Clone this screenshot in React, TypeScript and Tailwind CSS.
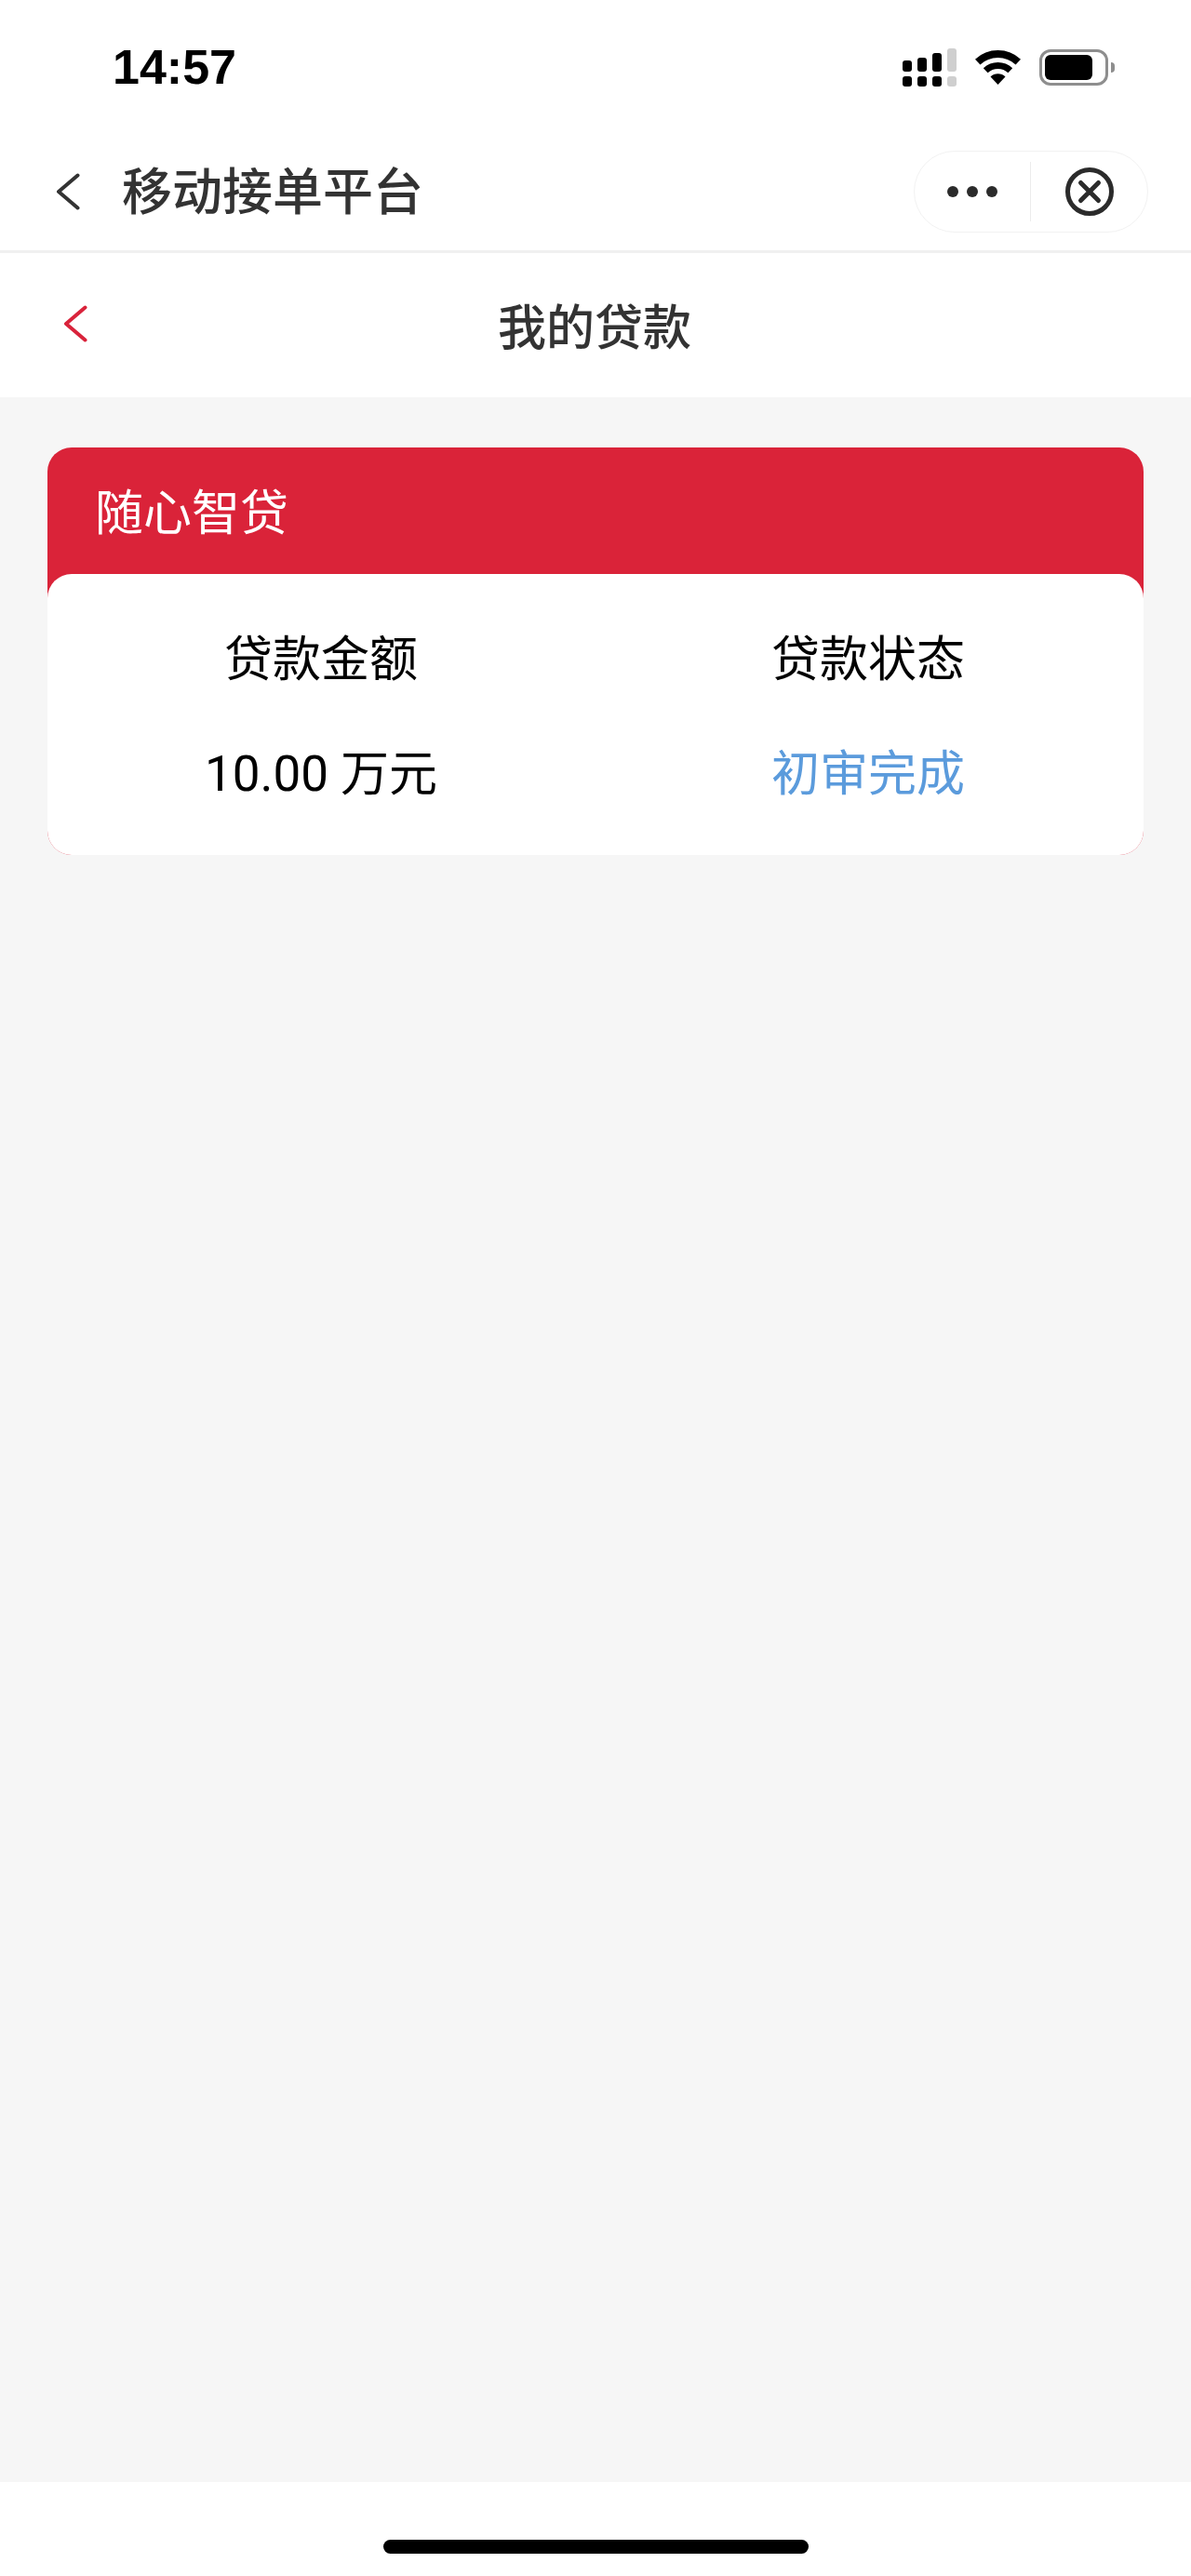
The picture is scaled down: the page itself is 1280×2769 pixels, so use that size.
const cjk = "font-['Noto_Sans_CJK_SC','Noto_Sans',sans-serif]"

function SignalIcon() {
  return (
    <svg width="58" height="41" viewBox="0 0 58 41" className="block">
      <rect x="0" y="13" width="10" height="12" rx="3" fill="#000" />
      <rect x="16" y="10" width="10" height="15" rx="3" fill="#000" />
      <rect x="32" y="5" width="10" height="20" rx="3" fill="#000" />
      <rect x="48" y="0" width="10" height="25" rx="3" fill="#cfcfcf" />
      <rect x="0" y="30" width="10" height="11" rx="3" fill="#000" />
      <rect x="16" y="30" width="10" height="11" rx="3" fill="#000" />
      <rect x="32" y="30" width="10" height="11" rx="3" fill="#000" />
      <rect x="48" y="30" width="10" height="11" rx="3" fill="#cfcfcf" />
    </svg>
  )
}

function WifiIcon() {
  return (
    <svg width="49" height="37" viewBox="0 0 49 37" className="block">
      <path d="M2.7 12.6 A32 32 0 0 1 46.3 12.6" fill="none" stroke="#000" strokeWidth="8" />
      <path d="M11.2 21.7 A19.5 19.5 0 0 1 37.8 21.7" fill="none" stroke="#000" strokeWidth="7" />
      <path d="M24.5 37 L16.5 28.4 A11.7 11.7 0 0 1 32.5 28.4 Z" fill="#000" />
    </svg>
  )
}

function BatteryIcon() {
  return (
    <div className="flex items-center gap-[3px]">
      <div className="flex h-[39px] w-[74px] items-center rounded-[12px] border-[3px] border-[#8e8e8e] pl-[3px]">
        <div className="h-[27px] w-[51px] rounded-[6px] bg-black" />
      </div>
      <div className="h-[11px] w-[4px] rounded-r-full bg-[#8e8e8e]" />
    </div>
  )
}

function Chevron({ color }: { color: string }) {
  return (
    <svg width="26" height="40" viewBox="0 0 26 40" className="block">
      <path d="M23.5 2.5 L3 20 L23.5 37.5" fill="none" stroke={color} strokeWidth="4" strokeLinecap="round" strokeLinejoin="round" />
    </svg>
  )
}

function CloseIcon() {
  return (
    <svg width="52" height="52" viewBox="0 0 52 52" className="block">
      <circle cx="26" cy="26" r="23.5" fill="none" stroke="#2b2b2b" strokeWidth="5" />
      <path d="M16.5 16.5 L35.5 35.5 M35.5 16.5 L16.5 35.5" fill="none" stroke="#2b2b2b" strokeWidth="5" strokeLinecap="round" />
    </svg>
  )
}

export default function App() {
  return (
    <div className={`flex h-[2769px] w-[1280px] flex-col bg-white ${cjk}`}>
      <div className="flex h-[142px] shrink-0 items-start justify-between pl-[121px] pr-[82px]">
        <div className="mt-[43px] font-['Liberation_Sans',sans-serif] text-[52px] leading-[58px] font-bold text-black">14:57</div>
        <div className="mt-[52px] flex items-start">
          <SignalIcon />
          <div className="ml-[20px] mt-[2px]">
            <WifiIcon />
          </div>
          <div className="ml-[20px] mt-[1px]">
            <BatteryIcon />
          </div>
        </div>
      </div>

      <div className="flex h-[130px] shrink-0 items-center justify-between border-b-[3px] border-[#f0f0f0] pl-[60px] pr-[46px]">
        <div className="flex items-center">
          <Chevron color="#333333" />
          <div className="mb-[5px] ml-[45px] text-[54px] leading-[60px] font-medium text-[#333333]">移动接单平台</div>
        </div>
        <div className="flex h-[88px] w-[252px] items-center rounded-full border border-[#f2f2f2] bg-white">
          <div className="flex w-[124px] items-center justify-center gap-[9px]">
            <span className="h-[12px] w-[12px] rounded-full bg-[#2b2b2b]" />
            <span className="h-[12px] w-[12px] rounded-full bg-[#2b2b2b]" />
            <span className="h-[12px] w-[12px] rounded-full bg-[#2b2b2b]" />
          </div>
          <div className="h-[64px] w-px bg-[#ececec]" />
          <div className="flex flex-1 items-center justify-center">
            <CloseIcon />
          </div>
        </div>
      </div>

      <div className="grid h-[155px] shrink-0 grid-cols-[1fr_auto_1fr] items-center pl-[68px]">
        <div className="mb-[3px]">
          <Chevron color="#d9233b" />
        </div>
        <div className="-ml-[70px] mb-[1px] text-[52px] leading-[60px] font-medium text-[#333333]">我的贷款</div>
        <div />
      </div>

      <div className="flex-1 bg-[#f6f6f6] px-[51px] pt-[54px]">
        <div className="rounded-[26px] bg-[#da2339]">
          <div className="flex h-[136px] items-center pb-[2px] pl-[51px] text-[52px] leading-[60px] text-white">随心智贷</div>
          <div className="grid h-[302px] grid-cols-2 rounded-[26px] bg-white pr-[2px] pt-[58px]">
            <div className="flex flex-col items-center gap-[62px]">
              <div className="text-[52px] leading-[60px] text-black">贷款金额</div>
              <div className="mt-[5px] font-['Roboto','Noto_Sans_CJK_SC',sans-serif] text-[52px] leading-[60px] text-black">
                <span className="text-[53px]">10.00</span> 万元
              </div>
            </div>
            <div className="flex flex-col items-center gap-[62px]">
              <div className="text-[52px] leading-[60px] text-black">贷款状态</div>
              <div className="mt-[1px] text-[52px] leading-[60px] text-[#5b9bdc]">初审完成</div>
            </div>
          </div>
        </div>
      </div>

      <div className="flex h-[101px] shrink-0 justify-center bg-white pt-[62px]">
        <div className="h-[15px] w-[457px] rounded-full bg-black" />
      </div>
    </div>
  )
}
